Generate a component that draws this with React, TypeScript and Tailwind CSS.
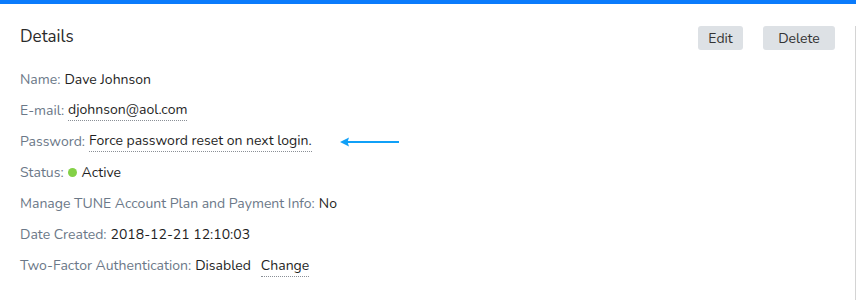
const font = { fontFamily: '"Nunito", "Lato", "Open Sans", sans-serif' };

function Row({ label, children }: { label: string; children: React.ReactNode }) {
  return (
    <div className="flex items-center h-[31px] text-[14px]">
      <span className="text-[#6b7888]">{label}:</span>
      <span className="ml-1 flex items-center text-[#1f1f1f]">{children}</span>
    </div>
  );
}

function Dotted({ children }: { children: React.ReactNode }) {
  return <span className="border-b border-dotted border-[#8a8f96] leading-[18px] pb-px">{children}</span>;
}

export default function App() {
  return (
    <div className="w-[856px] h-[300px] overflow-hidden bg-white" style={font}>
      <div className="h-1 bg-[#0a7bfc]" />
      <div className="h-[296px] border-r border-[#d4d4d4] px-5">
        <div className="flex items-center justify-between mt-[22px] h-6">
          <h2 className="text-[17px] text-[#2a2a2a] -mt-0.5">Details</h2>
          <div className="flex gap-5">
            <button className="h-6 w-[45px] rounded-[3px] bg-[#dde1e5] text-[14px] text-[#333]">Edit</button>
            <button className="h-6 w-[72px] rounded-[3px] bg-[#dde1e5] text-[14px] text-[#333]">Delete</button>
          </div>
        </div>
        <div className="mt-[14px] flex flex-col">
          <Row label="Name">Dave Johnson</Row>
          <Row label="E-mail">
            <Dotted>djohnson@aol.com</Dotted>
          </Row>
          <Row label="Password">
            <Dotted>Force password reset on next login.</Dotted>
            <svg className="ml-7" width="60" height="10" viewBox="0 0 60 10">
              <line x1="6" y1="5" x2="59" y2="5" stroke="#10a0f7" strokeWidth="2" />
              <path d="M0 5 L9 0.5 L7.5 5 L9 9.5 Z" fill="#10a0f7" />
            </svg>
          </Row>
          <Row label="Status">
            <span className="mr-[5px] h-[9px] w-[9px] rounded-full bg-[#84d147]" />
            Active
          </Row>
          <Row label="Manage TUNE Account Plan and Payment Info">No</Row>
          <Row label="Date Created">2018-12-21 12:10:03</Row>
          <Row label="Two-Factor Authentication">
            Disabled
            <span className="ml-[10px]">
              <Dotted>Change</Dotted>
            </span>
          </Row>
        </div>
      </div>
    </div>
  );
}
